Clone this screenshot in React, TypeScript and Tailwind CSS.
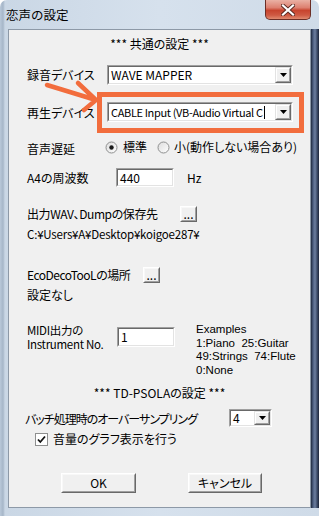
import React from "react";

const jp = "font-['Noto_Sans_CJK_JP',sans-serif] [font-feature-settings:'palt']";
const latin = "font-['Liberation_Sans',Arial,sans-serif]";

const Caret = () => (
  <svg width="7" height="4" viewBox="0 0 7 4">
    <path d="M0 0h7L3.5 4z" fill="#000" />
  </svg>
);

const Combo = ({ text, className, textClass }: { text: React.ReactNode; className: string; textClass?: string }) => (
  <div className={`flex border border-t-[#a0a0a0] border-l-[#a0a0a0] border-r-white border-b-white ${className}`}>
    <div className="flex flex-1 border border-t-[#696969] border-l-[#696969] border-r-[#e3e3e3] border-b-[#e3e3e3] bg-white">
      <div className={`flex flex-1 items-center whitespace-nowrap pl-[2px] ${textClass ?? `text-[12px] ${jp}`}`}>{text}</div>
      <div className="flex w-[16px] border border-t-[#e3e3e3] border-l-[#e3e3e3] border-r-[#696969] border-b-[#696969]">
        <div className="flex flex-1 items-center justify-center border border-t-white border-l-white border-r-[#a0a0a0] border-b-[#a0a0a0] bg-[#f0f0f0]">
          <Caret />
        </div>
      </div>
    </div>
  </div>
);

const Field = ({ value, className }: { value: string; className: string }) => (
  <div className={`flex border border-t-[#a0a0a0] border-l-[#a0a0a0] border-r-white border-b-white ${className}`}>
    <div className={`flex flex-1 items-center border border-t-[#696969] border-l-[#696969] border-r-[#e3e3e3] border-b-[#e3e3e3] bg-white pl-[2px] text-[12px] ${jp}`}>
      {value}
    </div>
  </div>
);

const Btn = ({ label, className }: { label: string; className: string }) => (
  <div className={`flex border border-t-white border-l-white border-r-[#696969] border-b-[#696969] ${className}`}>
    <div className={`flex flex-1 items-center justify-center border border-t-[#f8f8f8] border-l-[#f8f8f8] border-r-[#a0a0a0] border-b-[#a0a0a0] bg-[#f0f0f0] text-[12px] ${jp}`}>
      {label}
    </div>
  </div>
);

const Radio = ({ on }: { on?: boolean }) => (
  <svg width="13" height="13" viewBox="0 0 13 13">
    <defs>
      <linearGradient id={on ? "rg1" : "rg0"} x1="0" y1="0" x2="1" y2="1">
        <stop offset="0" stopColor="#dcdcdc" />
        <stop offset="1" stopColor="#ffffff" />
      </linearGradient>
    </defs>
    <circle cx="6.5" cy="6.5" r="5.5" fill={`url(#${on ? "rg1" : "rg0"})`} stroke="#8e8f8f" />
    {on && <circle cx="6.5" cy="6.5" r="2.2" fill="#1a1a1a" />}
  </svg>
);

const Check = () => (
  <svg width="13" height="13" viewBox="0 0 13 13">
    <rect x="0.5" y="0.5" width="12" height="12" fill="#fff" stroke="#8e8f8f" />
    <path d="M3 6.5l2.3 2.5L10 3.5" fill="none" stroke="#111" strokeWidth="1.8" />
  </svg>
);

export default function App() {
  return (
    <div className="relative h-[516px] w-[319px] overflow-hidden rounded-t-[7px] bg-[linear-gradient(to_right,#b9c8d9_0px,#a6b6c8_3px,#cad7e5_5px,#d6e1ed_160px,#cfdbe8_319px)]">
      {/* title bar */}
      <div className="flex h-[29px]">
        <div className={`flex flex-1 items-center pl-[6px] pt-[1px] text-[12.5px] text-black ${jp} [font-feature-settings:normal]`}>恋声の設定</div>
        <div className="mr-[8px] flex h-[20px] w-[46px] items-center justify-center rounded-b-[5px] border border-t-0 border-[#6b2e26] bg-[linear-gradient(to_bottom,#eab1a4_0%,#dd8070_40%,#c7442e_55%,#cf5a43_80%,#e08a6f_100%)]">
          <svg width="14" height="12" viewBox="0 0 14 12">
            <path d="M2 1.5l10 9M12 1.5l-10 9" stroke="#5a2a22" strokeWidth="4" strokeLinecap="square" />
            <path d="M2 1.5l10 9M12 1.5l-10 9" stroke="#fff" strokeWidth="2.2" strokeLinecap="square" />
          </svg>
        </div>
      </div>

      <div className="flex h-[479px]">
        <div className="w-[8px]" />
        {/* client area */}
        <div className="flex w-[303px] flex-col border border-[#8d99a7] bg-[#f0f0f0] text-black">
          <div className={`mt-[6px] flex h-[16px] items-center justify-center text-[12px] ${jp}`}>*** 共通の設定 ***</div>

          <div className="mt-[13px] flex h-[20px] items-center">
            <div className={`w-[98px] pl-[18px] text-[12px] ${jp}`}>録音デバイス</div>
            <Combo text="WAVE MAPPER" className="h-[20px] w-[186px]" />
          </div>

          <div className="mt-[17px] flex h-[20px] items-center">
            <div className={`w-[98px] pl-[18px] pt-[2px] text-[12px] ${jp}`}>再生デバイス</div>
            <Combo
              text={
                <>
                  CABLE Input (VB-Audio Virtual C<span className="ml-[1px] inline-block h-[13px] w-[1px] bg-black" />
                </>
              }
              textClass={`text-[11px] tracking-[-0.35px] ${jp}`}
              className="h-[20px] w-[186px]"
            />
          </div>

          <div className={`mt-[16px] flex h-[18px] items-center text-[12px] ${jp}`}>
            <div className="w-[96px] pl-[18px] pt-[4px]">音声遅延</div>
            <div className="flex items-center gap-[5px]">
              <Radio on />
              <span>標準</span>
            </div>
            <div className="ml-[10px] flex items-center gap-[4px]">
              <Radio />
              <span>小(動作しない場合あり)</span>
            </div>
          </div>

          <div className={`mt-[12px] flex h-[19px] items-center text-[12px] ${jp}`}>
            <div className="w-[107px] pl-[18px]">A4の周波数</div>
            <Field value="440" className="h-[19px] w-[58px]" />
            <div className="ml-[13px]">Hz</div>
          </div>

          <div className={`mt-[19px] flex h-[16px] items-center text-[12px] ${jp}`}>
            <div className="w-[171px] pl-[18px] tracking-[-0.4px]">出力WAV、Dumpの保存先</div>
            <Btn label="..." className="h-[16px] w-[17px]" />
          </div>

          <div className={`mt-[6px] flex h-[14px] items-center pl-[18px] text-[11.5px] tracking-[-0.2px] ${jp}`}>C:¥Users¥A¥Desktop¥koigoe287¥</div>

          <div className={`mt-[25px] flex h-[16px] items-center text-[12px] ${jp}`}>
            <div className="w-[134px] pl-[18px] tracking-[-0.5px]">EcoDecoTooLの場所</div>
            <Btn label="..." className="h-[16px] w-[17px]" />
          </div>

          <div className={`mt-[5px] flex h-[14px] items-center pl-[18px] text-[12px] ${jp}`}>設定なし</div>

          <div className="mt-[21px] flex h-[54px]">
            <div className={`w-[108px] pl-[18px] text-[11.5px] leading-[14px] tracking-[-0.3px] ${jp}`}>
              <div>MIDI出力の</div>
              <div>Instrument No.</div>
            </div>
            <Field value="1" className="mt-[4px] h-[20px] w-[58px]" />
            <div className={`ml-[21px] text-[11.5px] leading-[13.5px] ${latin}`}>
              <div>Examples</div>
              <div className="whitespace-pre">1:Piano  25:Guitar</div>
              <div className="whitespace-pre">49:Strings  74:Flute</div>
              <div>0:None</div>
            </div>
          </div>

          <div className={`mt-[8px] flex h-[16px] items-center justify-center text-[12px] ${jp}`}>*** TD-PSOLAの設定 ***</div>

          <div className={`mt-[8px] flex h-[18px] items-center text-[12px] ${jp}`}>
            <div className="w-[220px] pl-[16px] pt-[1px] tracking-[-1px]">バッチ処理時のオーバーサンプリング</div>
            <Combo text="4" className="h-[18px] w-[43px]" />
          </div>

          <div className={`mt-[5px] flex h-[14px] items-center gap-[5px] pl-[26px] text-[12px] ${jp}`}>
            <Check />
            <span>音量のグラフ表示を行う</span>
          </div>

          <div className="mt-[27px] flex h-[20px] gap-[52px] pl-[52px]">
            <Btn label="OK" className="h-[20px] w-[75px]" />
            <Btn label="キャンセル" className="h-[20px] w-[74px]" />
          </div>
        </div>
        <div className="w-[8px] bg-[linear-gradient(to_right,#1f2a3d_0px,#4a5c7e_2px,#6d7f9f_4px,#3e4e6c_6px,#1c2538_8px)]" />
      </div>
      <div className="h-[8px]" />

      {/* annotation overlay */}
      <svg className="pointer-events-none absolute left-0 top-0" width="319" height="516" viewBox="0 0 319 516">
        <rect x="99.5" y="94.5" width="202" height="36" fill="none" stroke="#f26d3d" strokeWidth="5" />
        <path d="M47 85L96 100M78 83L96 100L84 110" fill="none" stroke="#f26d3d" strokeWidth="4.5" strokeLinecap="round" strokeLinejoin="round" />
      </svg>
    </div>
  );
}
